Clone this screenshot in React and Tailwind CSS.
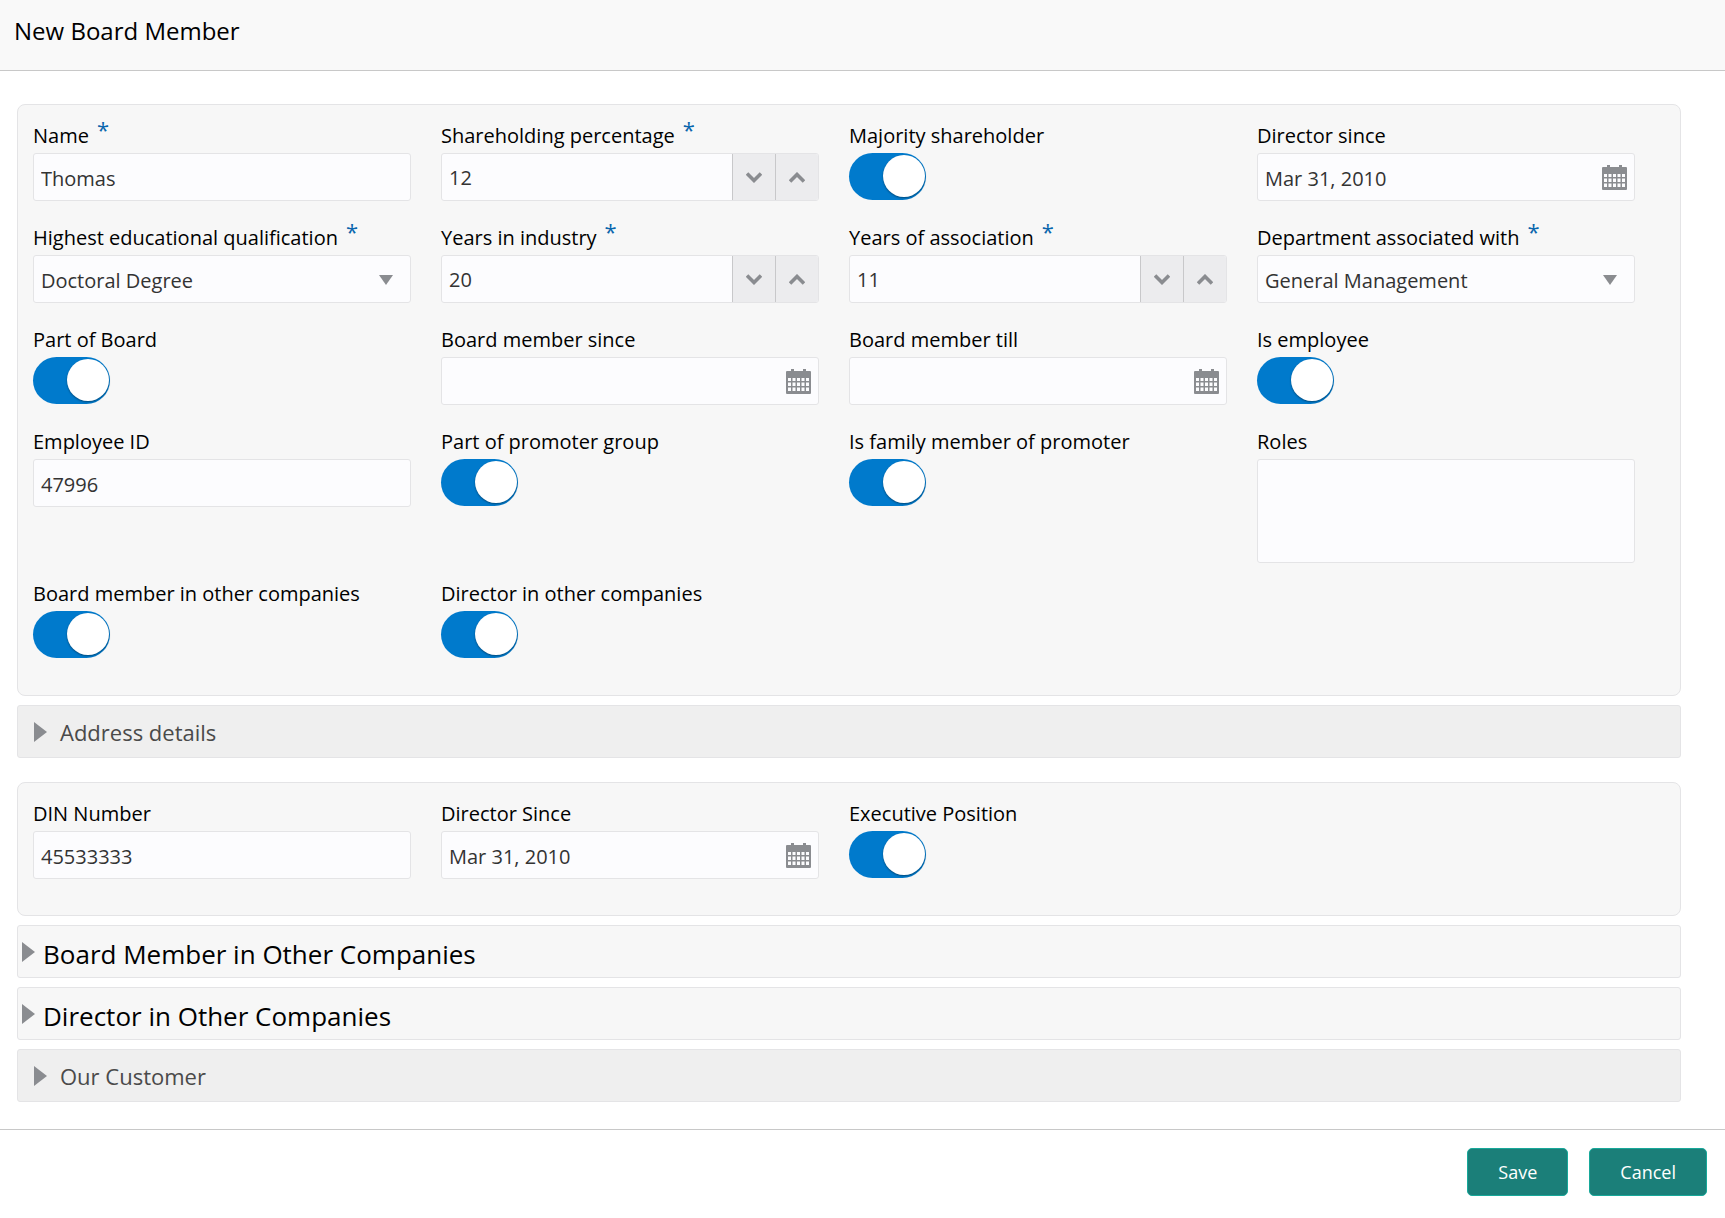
import React, { useId, useState } from 'react';
import clsx from 'clsx';

const DEGREES = ['Doctoral Degree', 'Master Degree', 'Bachelor Degree', 'Diploma'];
const DEPARTMENTS = ['General Management', 'Finance', 'Operations', 'Human Resources'];

const CalendarIcon = () => (
  <svg viewBox="0 0 25 25" className="h-[25px] w-[25px]" fill="#8a8c90" aria-hidden="true">
    <path
      fillRule="evenodd"
      d="M5 0h3v2h9V0h3v2h4a1 1 0 0 1 1 1V24a1 1 0 0 1-1 1H1a1 1 0 0 1-1-1V3a1 1 0 0 1 1-1h4z
        M2 9v3h3V9z M6.500 9v3h3V9z M11 9v3h3V9z M15.500 9v3h3V9z M20 9v3h3V9z
        M2 13.500v3.500h3v-3.500z M6.500 13.500v3.500h3v-3.500z M11 13.500v3.500h3v-3.500z M15.500 13.500v3.500h3v-3.500z M20 13.500v3.500h3v-3.500z
        M2 18.500v3.500h3v-3.500z M6.500 18.500v3.500h3v-3.500z M11 18.500v3.500h3v-3.500z M15.500 18.500v3.500h3v-3.500z M20 18.500v3.500h3v-3.500z"
    />
  </svg>
);

const Chevron = ({ up }) => (
  <svg viewBox="0 0 16 11" className="h-[11px] w-4" fill="none" stroke="#8a8c90" strokeWidth="3.6" aria-hidden="true">
    <path d={up ? 'M1 9.500 8 2.500 15 9.500' : 'M1 1.500 8 8.500 15 1.500'} />
  </svg>
);

const RightTriangle = () => (
  <svg viewBox="0 0 13 20" className="h-5 w-[13px] shrink-0" fill="#8a8c90" aria-hidden="true">
    <path d="M0 0 13 10 0 20z" />
  </svg>
);

const boxStyle = 'h-12 w-full rounded-[3px] border border-[#e4e4e6] bg-[#fcfcfe] px-[7px] text-[20px] text-[#333]';

const Label = ({ id, required, children }) => (
  <label htmlFor={id} className="flex h-[30px] items-center pb-1 text-[20px] text-black whitespace-nowrap">
    {children}
    {required && <span className="ml-2 self-start text-[22px] leading-3 text-[#0a66ad]">*</span>}
  </label>
);

const Field = ({ id, label, required, children }) => (
  <div className="min-h-[84px] min-w-0">
    <Label id={id} required={required}>{label}</Label>
    {children}
  </div>
);

const TextField = ({ label, required, initial = '' }) => {
  const id = useId();
  const [value, setValue] = useState(initial);

  return (
    <Field id={id} label={label} required={required}>
      <input
        id={id}
        type="text"
        className={clsx(boxStyle, 'pt-0.5')}
        value={value}
        onChange={(e) => setValue(e.target.value)}
      />
    </Field>
  );
};

const NumberField = ({ label, required, initial }) => {
  const id = useId();
  const [value, setValue] = useState(initial);
  const buttonStyle = 'flex w-[43px] items-center justify-center border-l border-[#c8c8ca] bg-[#ececee]';

  return (
    <Field id={id} label={label} required={required}>
      <div className="flex h-12 overflow-hidden rounded-[3px] border border-[#e4e4e6] bg-[#fcfcfe]">
        <input
          id={id}
          type="text"
          inputMode="numeric"
          className="min-w-0 flex-1 px-[7px] pt-0.5 text-[20px] text-[#333]"
          value={value}
          onChange={(e) => setValue(Number(e.target.value) || 0)}
        />
        <button type="button" aria-label="Decrease" className={buttonStyle} onClick={() => setValue(value - 1)}>
          <Chevron />
        </button>
        <button type="button" aria-label="Increase" className={buttonStyle} onClick={() => setValue(value + 1)}>
          <Chevron up />
        </button>
      </div>
    </Field>
  );
};

const DateField = ({ label, initial = '' }) => {
  const id = useId();
  const [value, setValue] = useState(initial);

  return (
    <Field id={id} label={label}>
      <div className="relative">
        <input
          id={id}
          type="text"
          className={clsx(boxStyle, 'pt-0.5')}
          value={value}
          onChange={(e) => setValue(e.target.value)}
        />
        <button type="button" aria-label="Select date" className="absolute inset-y-0 right-2 flex items-center">
          <CalendarIcon />
        </button>
      </div>
    </Field>
  );
};

const SelectField = ({ label, required, options }) => {
  const id = useId();

  return (
    <Field id={id} label={label} required={required}>
      <div className="relative">
        <select id={id} className={clsx(boxStyle, 'appearance-none pt-1')}>
          {options.map((option) => (
            <option key={option}>{option}</option>
          ))}
        </select>
        <svg
          viewBox="0 0 14 10"
          className="pointer-events-none absolute top-5 right-[18px] h-2.5 w-3.5"
          fill="#8a8c90"
          aria-hidden="true"
        >
          <path d="M0 0h14L7 10z" />
        </svg>
      </div>
    </Field>
  );
};

const ToggleField = ({ label }) => {
  const id = useId();

  return (
    <Field id={id} label={label}>
      <div className="relative h-[47px] w-[77px]">
        <input
          id={id}
          type="checkbox"
          role="switch"
          defaultChecked
          className="peer h-full w-full appearance-none rounded-full bg-gray-400 checked:bg-[#007acc]"
        />
        <span className="pointer-events-none absolute top-0.5 left-px h-[42px] w-[42px] rounded-full bg-white shadow-[0_1px_2px_rgba(0,0,0,0.4)] peer-checked:left-[34px]" />
      </div>
    </Field>
  );
};

const TextAreaField = ({ label }) => {
  const id = useId();

  return (
    <Field id={id} label={label}>
      <textarea
        id={id}
        className="block h-[104px] w-full resize-none rounded-[3px] border border-[#e4e4e6] bg-[#fcfcfe] p-[7px] text-[20px] text-[#333]"
      />
    </Field>
  );
};

const Panel = ({ children }) => (
  <section className="grid grid-cols-4 gap-x-[30px] gap-y-[18px] rounded-lg border border-[#e4e4e6] bg-[#f7f7f7] pt-[18px] pr-[45px] pb-[30px] pl-[15px]">
    {children}
  </section>
);

// "muted" bars are the nested sections, the others are top level headings
const CollapsedSection = ({ title, muted }) => (
  <button
    type="button"
    aria-expanded="false"
    className={clsx(
      'flex h-[53px] w-full items-center rounded-[3px] border border-[#e4e4e6] text-left',
      muted ? 'gap-[13px] bg-[#efefef] pl-4 text-[22px] text-[#4a4a4a]' : 'gap-2 bg-[#f7f7f7] pl-1 text-[26px] text-black'
    )}
  >
    <RightTriangle />
    <span className={muted ? 'pt-0.5' : 'pt-1.5'}>{title}</span>
  </button>
);

const App = () => {
  const footerButton =
    'h-12 rounded-[5px] border border-[#17a99a] bg-[#1b7f79] px-[30px] text-[18px] text-white hover:bg-[#166c67]';

  return (
    <div className="min-h-screen bg-white font-['Open_Sans',sans-serif]">
      <header className="h-[71px] border-b border-[#c8c8c8] bg-[#f9f9f9] px-3.5 pt-3">
        <h1 className="text-[24px] leading-[38px] text-black">New Board Member</h1>
      </header>

      <main className="flex flex-col gap-[9px] pt-[33px] pr-11 pb-[27px] pl-[17px]">
        <Panel>
          <TextField label="Name" required initial="Thomas" />
          <NumberField label="Shareholding percentage" required initial={12} />
          <ToggleField label="Majority shareholder" />
          <DateField label="Director since" initial="Mar 31, 2010" />

          <SelectField label="Highest educational qualification" required options={DEGREES} />
          <NumberField label="Years in industry" required initial={20} />
          <NumberField label="Years of association" required initial={11} />
          <SelectField label="Department associated with" required options={DEPARTMENTS} />

          <ToggleField label="Part of Board" />
          <DateField label="Board member since" />
          <DateField label="Board member till" />
          <ToggleField label="Is employee" />

          <TextField label="Employee ID" initial="47996" />
          <ToggleField label="Part of promoter group" />
          <ToggleField label="Is family member of promoter" />
          <TextAreaField label="Roles" />

          <ToggleField label="Board member in other companies" />
          <ToggleField label="Director in other companies" />
        </Panel>

        <div className="mb-[15px]">
          <CollapsedSection title="Address details" muted />
        </div>

        <Panel>
          <TextField label="DIN Number" initial="45533333" />
          <DateField label="Director Since" initial="Mar 31, 2010" />
          <ToggleField label="Executive Position" />
        </Panel>

        <CollapsedSection title="Board Member in Other Companies" />
        <CollapsedSection title="Director in Other Companies" />
        <CollapsedSection title="Our Customer" muted />
      </main>

      <footer className="flex justify-end gap-[21px] border-t border-[#c8c8c8] pt-[18px] pr-[18px] pb-5">
        <button type="button" className={footerButton}>Save</button>
        <button type="button" className={footerButton}>Cancel</button>
      </footer>
    </div>
  );
};

export default App;
